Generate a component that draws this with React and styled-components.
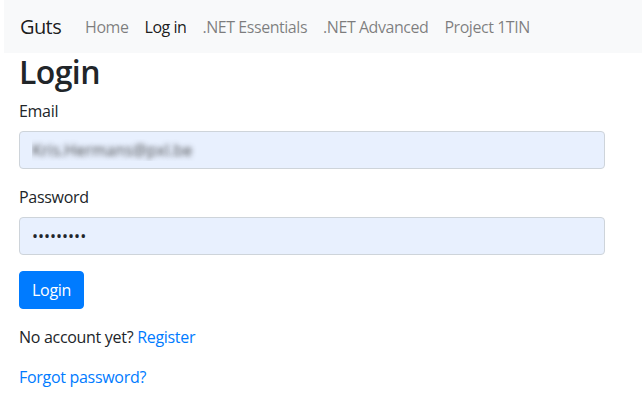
import React from "react";
import styled, { createGlobalStyle } from "styled-components";

const GlobalStyle = createGlobalStyle`
  html, body {
    margin: 0;
    padding: 0;
    background: #fff;
  }
  body {
    font-family: "Open Sans", "Noto Sans", "Liberation Sans", sans-serif;
    font-size: 16px;
    line-height: 1.5;
    letter-spacing: -0.3px;
    color: #212529;
  }
  * {
    box-sizing: border-box;
  }
`;

const Page = styled.div`
  padding-left: 4px;
  width: 642px;
`;

const Navbar = styled.nav`
  display: flex;
  align-items: center;
  height: 53px;
  padding: 0 16px;
  background-color: #f8f9fa;
`;

const Brand = styled.a`
  font-size: 20px;
  line-height: 30px;
  letter-spacing: -0.6px;
  margin-right: 16px;
  color: rgba(0, 0, 0, 0.9);
  text-decoration: none;
`;

const NavList = styled.ul`
  display: flex;
  list-style: none;
  margin: 0;
  padding: 0;
`;

const NavLink = styled.a`
  display: block;
  padding: 8px;
  letter-spacing: -0.45px;
  color: ${(p) => (p.$active ? "rgba(0, 0, 0, 0.9)" : "rgba(0, 0, 0, 0.5)")};
  text-decoration: none;
`;

const Container = styled.main`
  padding: 0 15px;
  width: 616px;
`;

const Title = styled.h1`
  margin: 0 0 8px;
  font-size: 32px;
  font-weight: 600;
  line-height: 1.2;
  letter-spacing: -0.6px;
`;

const FormGroup = styled.div`
  margin-bottom: 16px;
`;

const Label = styled.label`
  display: inline-block;
  margin-bottom: 8px;
`;

const Input = styled.input`
  display: block;
  width: 100%;
  height: 38px;
  padding: 6px 12px;
  font-family: inherit;
  font-size: 16px;
  line-height: 1.5;
  color: ${(p) => (p.$blurred ? "transparent" : "#212529")};
  text-shadow: ${(p) => (p.$blurred ? "0 0 5px rgba(40, 40, 40, 0.8)" : "none")};
  background-color: #e8f0fe;
  border: 1px solid #ced4da;
  border-radius: 4px;
  outline: none;
`;

const Button = styled.button`
  display: inline-block;
  padding: 6px 12px;
  font-family: inherit;
  font-size: 16px;
  line-height: 1.5;
  letter-spacing: -0.3px;
  color: #fff;
  background-color: #007bff;
  border: 1px solid #007bff;
  border-radius: 4px;
  margin-bottom: 16px;
`;

const Text = styled.p`
  margin: 0 0 16px;
`;

const Link = styled.a`
  color: #007bff;
  text-decoration: none;
`;

const links = [
  { label: "Home" },
  { label: "Log in", active: true },
  { label: ".NET Essentials" },
  { label: ".NET Advanced" },
  { label: "Project 1TIN" },
];

export default function App() {
  return (
    <Page>
      <GlobalStyle />
      <Navbar>
        <Brand href="#">Guts</Brand>
        <NavList>
          {links.map((l) => (
            <li key={l.label}>
              <NavLink href="#" $active={l.active}>
                {l.label}
              </NavLink>
            </li>
          ))}
        </NavList>
      </Navbar>
      <Container>
        <Title>Login</Title>
        <form onSubmit={(e) => e.preventDefault()}>
          <FormGroup>
            <Label htmlFor="email">Email</Label>
            <Input id="email" type="text" defaultValue="Kris.Hermans@pxl.be" $blurred readOnly />
          </FormGroup>
          <FormGroup>
            <Label htmlFor="password">Password</Label>
            <Input id="password" type="password" defaultValue="123456789" readOnly />
          </FormGroup>
          <Button type="submit">Login</Button>
        </form>
        <Text>
          No account yet? <Link href="#">Register</Link>
        </Text>
        <Text>
          <Link href="#">Forgot password?</Link>
        </Text>
      </Container>
    </Page>
  );
}
